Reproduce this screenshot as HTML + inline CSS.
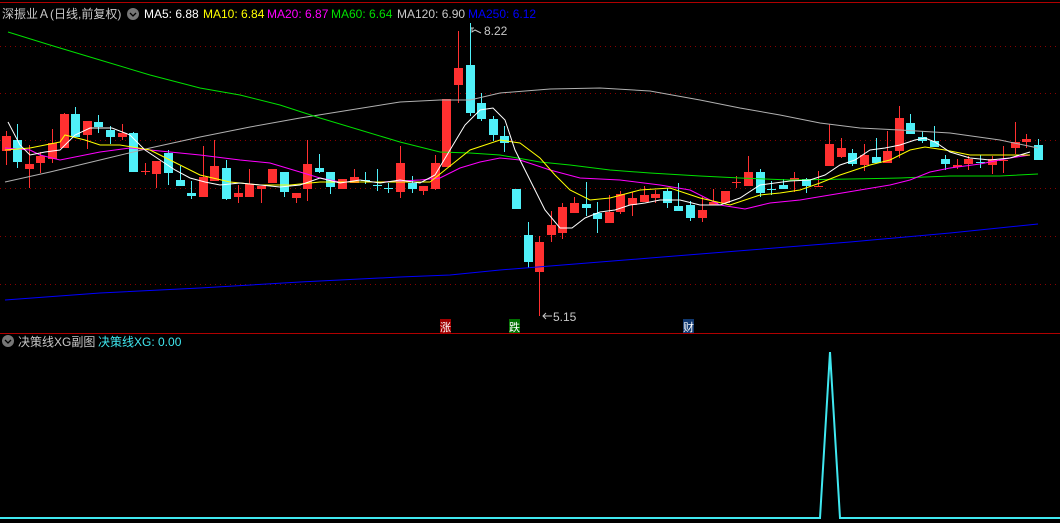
<!DOCTYPE html>
<html><head><meta charset="utf-8"><style>
html,body{margin:0;padding:0;background:#000;width:1060px;height:523px;overflow:hidden}
svg{display:block}
text{font-family:"Liberation Sans","Noto Sans CJK SC",sans-serif;font-size:12px}
</style></head><body>
<svg id="s" width="1060" height="523" xmlns="http://www.w3.org/2000/svg">
<line x1="0" y1="2.5" x2="1060" y2="2.5" stroke="#b00000"/>
<g stroke="#8a0000" stroke-dasharray="1,4">
<line x1="0" y1="46.5" x2="1060" y2="46.5"/><line x1="0" y1="93.5" x2="1060" y2="93.5"/>
<line x1="0" y1="140.5" x2="1060" y2="140.5"/><line x1="0" y1="188.5" x2="1060" y2="188.5"/>
<line x1="0" y1="236.5" x2="1060" y2="236.5"/><line x1="0" y1="284.5" x2="1060" y2="284.5"/>
</g>
<line x1="0" y1="333.5" x2="1060" y2="333.5" stroke="#b00000"/>
<g id="c"></g>
<g fill="none" stroke-width="1">
<polyline stroke="#0000ff" points="5,300 100,293 200,288 300,282 400,277 450,275 500,270 550,266 650,258 750,250 850,242 950,233 1038,224"/>
<polyline stroke="#b0b0b0" points="5,182 50,172 100,160 150,148 200,137 250,127 300,118 350,110 400,102 440,100 470,100 500,93 550,89 600,88 650,91 700,100 740,108 780,115 820,123 860,128 900,130 950,133 1000,140 1038,148"/>
<polyline stroke="#00e000" points="8,32 50,45 100,60 150,75 200,88 240,95 280,105 320,118 360,130 400,142 440,152 470,153 500,155 540,162 570,165 610,170 650,173 700,176 740,178 790,180 850,179 900,178 950,176 1000,176 1038,174"/>
<polyline stroke="#ff00ff" points="5,148 30,150 40,155 60,160 100,152 130,148 160,151 200,155 240,160 270,163 300,172 320,178 340,182 380,182 420,180 440,178 460,168 480,162 500,158 520,160 550,170 580,178 620,180 660,185 690,190 720,205 745,209 770,203 800,200 830,195 860,190 890,185 910,180 930,172 950,168 980,164 1010,158 1030,155"/>
<polyline stroke="#ffff00" points="5,150 30,148 60,142 65,135 85,140 100,145 120,145 150,150 170,160 200,175 230,182 260,185 290,185 320,182 360,182 400,182 430,182 445,170 470,150 500,140 520,143 540,158 555,175 570,190 590,200 610,198 640,190 670,188 700,198 730,205 760,195 780,193 800,190 820,183 840,175 870,165 890,160 910,150 925,147 945,150 970,155 1000,155 1030,155"/>
<polyline stroke="#ffffff" points="8,122 20,145 30,155 45,152 60,150 75,135 90,128 100,128 112,128 130,135 145,150 160,160 175,170 190,178 205,182 220,185 240,183 260,185 280,187 300,185 320,178 340,183 360,180 380,183 400,180 420,183 435,175 450,150 465,125 480,110 493,108 505,120 515,150 530,180 545,210 560,228 572,228 585,218 600,212 615,210 630,205 645,203 660,200 680,200 700,205 720,205 740,198 760,185 775,183 790,181 810,180 825,175 840,165 855,160 870,150 885,148 900,145 915,140 925,138 935,142 950,152 970,158 990,160 1010,158 1030,152"/>
<polyline stroke="#40e8f0" stroke-width="2" points="0,518 820,518 830,352 840,518 1060,518"/>
</g>
<text x="2" y="18" fill="#c8c8c8">深振业Ａ(日线,前复权)</text>
<circle cx="133" cy="14" r="6" fill="#777"/><path d="M130 13 l3 3 l3 -3" stroke="#000" fill="none" stroke-width="1.3"/>
<text x="144" y="18" fill="#fff">MA5: 6.88</text>
<text x="203" y="18" fill="#ffff00">MA10: 6.84</text>
<text x="267" y="18" fill="#ff00ff">MA20: 6.87</text>
<text x="331" y="18" fill="#00e000">MA60: 6.64</text>
<text x="397" y="18" fill="#c8c8c8">MA120: 6.90</text>
<text x="468" y="18" fill="#0000ff">MA250: 6.12</text>
<path d="M471 28 h3 M472 28 v4 l3 -2 l6 3" stroke="#c8c8c8" fill="none"/>
<text x="484" y="35" fill="#c8c8c8">8.22</text>
<path d="M543 316 h9 M546 313 l-3 3 l3 3" stroke="#c8c8c8" fill="none"/>
<text x="553" y="321" fill="#c8c8c8">5.15</text>
<rect x="440" y="319" width="11" height="14" fill="#a00000"/><text x="440" y="331" fill="#fff" style="font-size:11px">涨</text>
<rect x="509" y="319" width="11" height="14" fill="#007000"/><text x="509" y="331" fill="#fff" style="font-size:11px">跌</text>
<rect x="683" y="319" width="11" height="14" fill="#103870"/><text x="683" y="331" fill="#fff" style="font-size:11px">财</text>
<circle cx="8" cy="341" r="6" fill="#777"/><path d="M5 340 l3 3 l3 -3" stroke="#000" fill="none" stroke-width="1.3"/>
<text x="18" y="346" fill="#c8c8c8">决策线XG副图</text>
<text x="98" y="346" fill="#40e8f0">决策线XG: 0.00</text>
</svg>
<script>
var d=[[136,151,131,165,'r'],[140,162,124,168,'c'],[164,169,145,188,'r'],[156,163,152,173,'r'],[143,159,129,163,'r'],[114,148,113,148,'r'],[114,137,107,137,'c'],[121,135,121,149,'r'],[122,127,115,133,'c'],[130,137,126,144,'c'],[133,137,124,140,'r'],[133,172,132,172,'c'],[171,171,163,175,'r'],[161,174,161,188,'r'],[153,173,150,185,'c'],[180,186,166,186,'c'],[193,196,181,199,'c'],[177,197,146,197,'r'],[166,181,140,181,'r'],[168,199,160,200,'c'],[193,197,185,203,'r'],[184,197,169,197,'r'],[186,189,186,203,'r'],[169,183,169,183,'r'],[172,192,172,197,'c'],[193,198,193,203,'r'],[164,189,140,201,'r'],[168,172,154,173,'c'],[172,187,172,194,'c'],[179,189,179,189,'r'],[177,183,169,183,'r'],[180,180,172,184,'c'],[185,185,169,191,'c'],[188,188,183,193,'c'],[163,192,146,198,'r'],[183,189,176,193,'c'],[186,191,186,195,'r'],[163,189,155,190,'r'],[99,167,99,167,'r'],[68,85,31,103,'r'],[65,113,23,116,'c'],[103,119,93,121,'c'],[119,135,116,141,'c'],[136,143,126,152,'c'],[189,209,189,209,'c'],[235,262,222,268,'c'],[242,272,236,316,'r'],[225,235,211,242,'r'],[207,233,203,239,'r'],[203,213,197,213,'r'],[204,208,182,216,'c'],[213,219,202,233,'c'],[212,223,195,223,'r'],[194,212,191,214,'r'],[198,205,192,216,'r'],[195,202,186,202,'r'],[194,198,190,203,'r'],[191,203,188,208,'c'],[206,211,183,211,'c'],[205,218,201,221,'c'],[210,218,197,222,'r'],[202,205,189,205,'r'],[191,203,191,203,'r'],[182,182,176,188,'r'],[172,186,156,186,'r'],[172,193,169,197,'c'],[189,189,181,195,'c'],[185,189,179,189,'c'],[178,180,172,192,'r'],[179,186,178,193,'c'],[186,187,171,187,'r'],[144,166,124,166,'r'],[148,157,138,158,'r'],[153,164,149,166,'c'],[155,165,144,171,'r'],[157,163,138,163,'c'],[151,163,131,163,'r'],[118,151,106,158,'r'],[123,134,114,134,'c'],[137,141,131,143,'c'],[141,147,126,147,'c'],[159,164,155,170,'c'],[165,167,159,169,'r'],[159,164,156,170,'r'],[162,162,155,168,'c'],[159,165,156,174,'r'],[160,160,146,173,'r'],[142,148,122,154,'r'],[139,142,134,148,'r'],[145,160,139,160,'c']];
var h='';for(var i=0;i<d.length;i++){var x=5.5+11.6*i,a=d[i],col=a[4]=='r'?'#ff3030':'#50f0f8';x=Math.round(x)+0.5;
h+='<line x1="'+x+'" y1="'+a[2]+'" x2="'+x+'" y2="'+a[3]+'" stroke="'+col+'"/>';
var ht=Math.max(a[1]-a[0],1);h+='<rect x="'+(x-4.5)+'" y="'+a[0]+'" width="9" height="'+ht+'" fill="'+col+'"/>';}
document.getElementById('c').innerHTML=h;
</script>
</body></html>
